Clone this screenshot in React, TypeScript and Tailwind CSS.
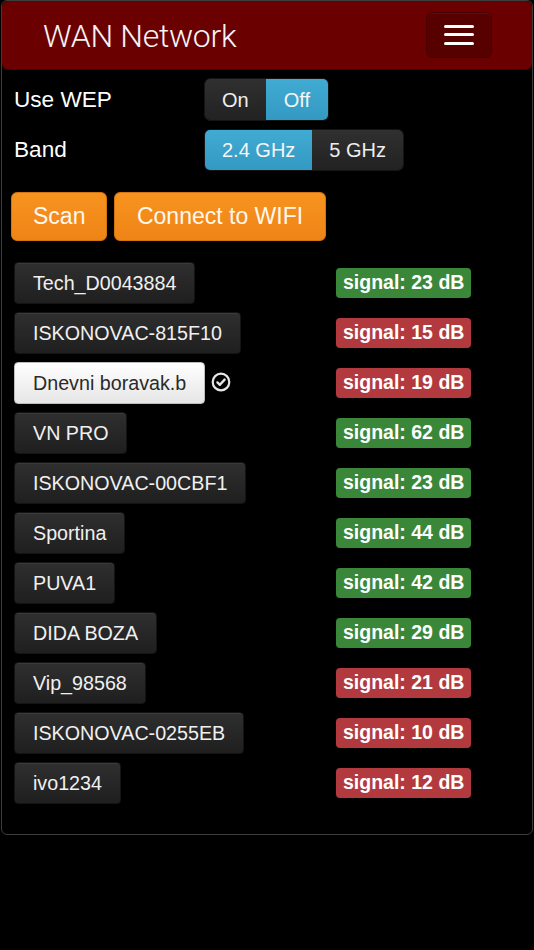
import React from "react";

const nets: [string, number, boolean][] = [
  ["Tech_D0043884", 23, true],
  ["ISKONOVAC-815F10", 15, false],
  ["Dnevni boravak.b", 19, false],
  ["VN PRO", 62, true],
  ["ISKONOVAC-00CBF1", 23, true],
  ["Sportina", 44, true],
  ["PUVA1", 42, true],
  ["DIDA BOZA", 29, true],
  ["Vip_98568", 21, false],
  ["ISKONOVAC-0255EB", 10, false],
  ["ivo1234", 12, false],
];

function CheckIcon() {
  return (
    <svg width="20" height="20" viewBox="0 0 20 20" className="ml-[6px] -mt-[3px]">
      <circle cx="10" cy="10" r="8.3" fill="none" stroke="#e6e6e6" strokeWidth="2.2" />
      <path d="M6.4 10.4 L8.9 12.8 L13.6 7.6" fill="none" stroke="#e6e6e6" strokeWidth="2.4" strokeLinecap="round" strokeLinejoin="round" />
    </svg>
  );
}

export default function App() {
  return (
    <div className="w-[534px] h-[950px] bg-black font-['Liberation_Sans',Arial,sans-serif] text-white">
      <div className="ml-[1px] w-[532px] border border-[#3c3c3c] rounded-[6px] pb-[30px]">
        {/* Header */}
        <div className="h-[69px] bg-[#6b0000] rounded-[6px] border-b border-[#4a0000] flex items-center justify-between pl-[41px] pr-[40px]">
          <div className="font-['Roboto',sans-serif] font-light text-[32px] leading-none tracking-[-0.3px] text-[#f4f4f4] mt-[1px]">
            WAN Network
          </div>
          <div className="w-[66px] h-[46px] -mt-[1px] rounded-[6px] bg-[#560000] border border-[#4a0000] shadow-[inset_0_1px_0_rgba(255,255,255,0.06)] flex flex-col items-center justify-center gap-[5.5px]">
            <div className="w-[30px] h-[3px] rounded-full bg-white" />
            <div className="w-[30px] h-[3px] rounded-full bg-white" />
            <div className="w-[30px] h-[3px] rounded-full bg-white" />
          </div>
        </div>

        {/* Settings */}
        <div className="pl-[12px] pt-[8px] flex flex-col gap-[8px]">
          <div className="flex items-center">
            <div className="w-[190px] text-[22.6px] leading-none mt-[1px]">Use WEP</div>
            <div className="flex h-[43px] rounded-[6px] overflow-hidden border border-[#151515] text-[20px]">
              <div className="px-[17px] flex items-center bg-linear-to-b from-[#303030] to-[#222222] text-[#eeeeee]">On</div>
              <div className="px-[18px] flex items-center bg-linear-to-b from-[#41abd3] to-[#3399c2] text-[#f6f6f6]">Off</div>
            </div>
          </div>
          <div className="flex items-center">
            <div className="w-[190px] text-[22.6px] leading-none mt-[1px]">Band</div>
            <div className="flex h-[42px] rounded-[6px] overflow-hidden border border-[#151515] text-[20px]">
              <div className="px-[17px] flex items-center bg-linear-to-b from-[#41abd3] to-[#3399c2] text-[#f6f6f6]">2.4 GHz</div>
              <div className="px-[17px] flex items-center bg-linear-to-b from-[#303030] to-[#222222] text-[#eeeeee]">5 GHz</div>
            </div>
          </div>
        </div>

        {/* Actions */}
        <div className="pl-[9px] pt-[21px] flex gap-[7px]">
          <div className="h-[49px] px-[21px] flex items-center rounded-[6px] border border-[#d4740f] bg-linear-to-b from-[#f7931f] to-[#ef8416] text-[23px] text-[#fff8ee]">
            Scan
          </div>
          <div className="h-[49px] px-[21.5px] flex items-center rounded-[6px] border border-[#d4740f] bg-linear-to-b from-[#f7931f] to-[#ef8416] text-[23px] text-[#fff8ee]">
            Connect to WIFI
          </div>
        </div>

        {/* Networks */}
        <div className="pl-[12px] pt-[21px] flex flex-col gap-[8px]">
          {nets.map(([name, sig, good], i) => {
            const selected = i === 2;
            return (
              <div key={name} className="flex items-center h-[42px]">
                <div className="w-[322px] flex items-center">
                  {selected ? (
                    <div className="h-[42px] px-[18px] pt-[1px] flex items-center rounded-[4px] border border-[#bdbdbd] bg-linear-to-b from-[#ffffff] to-[#e6e6e6] text-[#2a2a2a] text-[19.7px]">
                      {name}
                    </div>
                  ) : (
                    <div className="h-[42px] px-[18px] pt-[1px] flex items-center rounded-[4px] border border-[#141414] bg-linear-to-b from-[#2f2f2f] to-[#1f1f1f] shadow-[inset_0_1px_0_rgba(255,255,255,0.06)] text-[#f0f0f0] text-[19.7px]">
                      {name}
                    </div>
                  )}
                  {selected && <CheckIcon />}
                </div>
                <div
                  className={
                    "h-[30px] px-[7px] flex items-center rounded-[4px] font-bold text-[19.5px] text-white " +
                    (good ? "bg-[#3a873a]" : "bg-[#b23a3e]")
                  }
                >
                  signal: {sig} dB
                </div>
              </div>
            );
          })}
        </div>
      </div>
    </div>
  );
}
